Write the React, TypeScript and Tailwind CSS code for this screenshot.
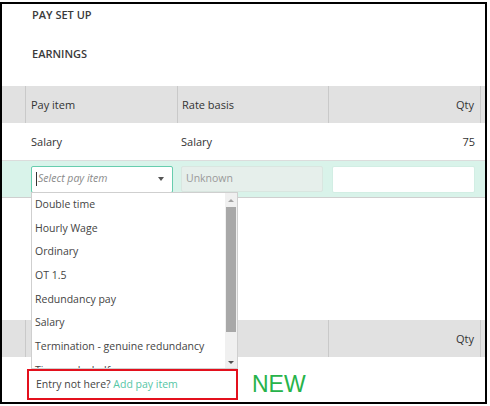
const items = [
  "Double time",
  "Hourly Wage",
  "Ordinary",
  "OT 1.5",
  "Redundancy pay",
  "Salary",
  "Termination - genuine redundancy",
  "Time and a half",
];

function HeaderRow() {
  return (
    <div className="grid h-[37px] grid-cols-[24px_152px_151px_152px] bg-[#e1e1e1] text-[11px] text-[#333]">
      <div className="border-r border-[#c9c9c9]" />
      <div className="flex items-center border-r border-[#c9c9c9] px-[5px] pt-[1px]">Pay item</div>
      <div className="flex items-center border-r border-[#c9c9c9] px-[4px] pt-[1px]">Rate basis</div>
      <div className="flex items-center justify-end border-r border-[#c9c9c9] pr-[6px] pt-[1px]">Qty</div>
    </div>
  );
}

function Dropdown() {
  return (
    <div className="absolute left-[29px] top-[188px] flex h-[177px] w-[207px] overflow-hidden border border-[#cfcfcf] bg-white">
      <div className="flex-1 text-[10.5px] text-[#444]">
        {items.map((item) => (
          <div key={item} className="flex h-[23.7px] items-center whitespace-nowrap pl-[3px]">
            {item}
          </div>
        ))}
      </div>
      <div className="flex w-[12px] flex-col items-center bg-[#f0f0f0]">
        <div className="flex h-[14px] items-center">
          <div className="h-0 w-0 border-x-[3px] border-b-[3px] border-x-transparent border-b-[#a3a3a3]" />
        </div>
        <div className="h-[125px] w-[10px] bg-[#a8a8a8]" />
        <div className="flex-1" />
        <div className="flex h-[12px] items-center">
          <div className="h-0 w-0 border-x-[3px] border-t-[3px] border-x-transparent border-t-[#505050]" />
        </div>
      </div>
    </div>
  );
}

export default function App() {
  return (
    <div className="h-[406px] w-[490px] bg-white font-['Open_Sans',sans-serif] text-[#333]">
      <div className="relative mt-[2px] h-[402px] w-[487px] overflow-hidden border-2 border-black">
        <div className="flex h-[22px] items-center pl-[30px] text-[11px] font-semibold text-[#3a3a3a]">PAY SET UP</div>
        <div className="mt-[17px] flex h-[22px] items-center pl-[30px] text-[11px] font-semibold text-[#3a3a3a]">EARNINGS</div>
        <div className="mt-[21px]">
          <HeaderRow />
        </div>
        <div className="grid h-[38px] grid-cols-[24px_152px_151px_152px] border-b border-[#dcdcdc] pt-[2px] text-[11px]">
          <div />
          <div className="flex items-center px-[5px]">Salary</div>
          <div className="flex items-center px-[3px]">Salary</div>
          <div className="flex items-center justify-end pr-[6px]">75</div>
        </div>
        <div className="grid h-[37px] grid-cols-[24px_152px_151px_152px] items-center border-b border-[#cfcfcf] bg-[#d9f3ea]">
          <div />
          <div className="pl-[5px] pr-[5px]">
            <div className="flex h-[27px] items-center rounded-[2px] border border-[#67cdae] bg-white pl-[4px] pr-[8px]">
              <div className="mr-[1px] h-[14px] w-px bg-[#333]" />
              <span className="flex-1 text-[10.5px] italic text-[#8a8a8a]">Select pay item</span>
              <div className="h-0 w-0 border-x-[3.5px] border-t-[4px] border-x-transparent border-t-[#555]" />
            </div>
          </div>
          <div className="pl-[3px] pr-[6px]">
            <div className="flex h-[26px] items-center rounded-[2px] border border-[#d9e6e0] bg-[#e6efeb] pl-[4px] text-[10.5px] text-[#9a9a9a]">
              Unknown
            </div>
          </div>
          <div className="pl-[3px] pr-[6px]">
            <div className="h-[27px] rounded-[2px] border border-[#d2eee4] bg-white" />
          </div>
        </div>
        <div className="h-[122px]" />
        <HeaderRow />

        <Dropdown />

        <div className="absolute left-[25px] top-[365px] flex h-[31px] w-[211px] items-center border-2 border-[#e3101d] bg-white pl-[7px] text-[10.5px]">
          <span className="text-[#444]">Entry not here?&nbsp;</span>
          <span className="text-[#55c6a5]">Add pay item</span>
        </div>
        <div className="absolute left-[250px] top-[369px] font-['Liberation_Sans',Arial,sans-serif] text-[23px] leading-[23px] text-[#27b34a]">
          NEW
        </div>
      </div>
    </div>
  );
}
